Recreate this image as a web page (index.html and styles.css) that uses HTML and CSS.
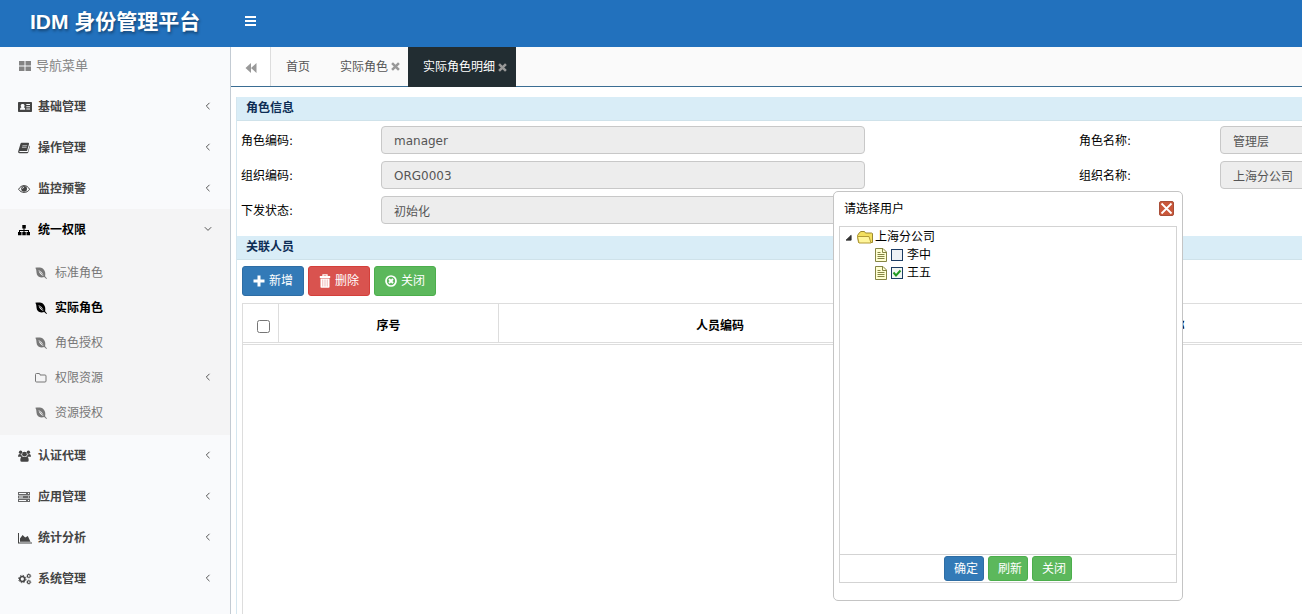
FILE: index.html
```html
<!DOCTYPE html>
<html lang="zh-CN">
<head>
<meta charset="utf-8">
<title>IDM 身份管理平台</title>
<link rel="stylesheet" href="styles.css">
</head>
<body>
<svg class="defs" aria-hidden="true">
  <symbol id="leaf" viewBox="0 0 12 12"><path fill="currentColor" fill-rule="evenodd" d="M.3.8C3 .5 6.500.2 8.500 2.200C10.600 4.400 10.500 7 10.100 9.300L12 11.600L11.400 12L9.200 10.100C6 10.900 3 10.200 1.900 7.400C1.100 5 1.800 2.600.3.800ZM3.500 3C3.700 5.500 6 8.200 8.900 9.300C8 6.200 6 4 3.500 3Z"/><path fill="none" stroke="currentColor" stroke-width=".7" d="M4 3.500 9 9.300"/></symbol>
  <symbol id="left" viewBox="0 0 6 8"><path fill="none" stroke="currentColor" stroke-width="1" d="M4.500.8 1.300 4l3.200 3.200"/></symbol>
  <symbol id="cross" viewBox="0 0 10 10"><path fill="none" stroke="currentColor" stroke-width="2.800" d="M1.200 1.200l7.600 7.600M8.800 1.200 1.200 8.800"/></symbol>
  <symbol id="sheet" viewBox="0 0 12 14"><path fill="#ffffd2" stroke="#858544" d="M.5.5h7.500l3.500 3.500v9.500H.5z"/><path fill="none" stroke="#858544" d="M7.500.5V4.500h4M2.500 4.500h3M2.500 6.500h7M2.500 8.500h7M2.500 10.500h7"/></symbol>
</svg>

<header class="topbar">
  <h1 class="brand">IDM 身份管理平台</h1>
  <button class="burger" type="button" aria-label="切换菜单"><svg width="11" height="10" viewBox="0 0 11 10"><path fill="#fff" d="M0 0h11v2H0zM0 4h11v2H0zM0 8h11v2H0z"/></svg></button>
</header>

<div class="shell">
  <nav class="sidebar">
    <div class="nav-title"><svg width="12" height="10" viewBox="0 0 12 10"><path fill="currentColor" d="M0 0h5.500v4.500H0zM6.500 0H12v4.500H6.500zM0 5.500h5.500V10H0zM6.500 5.500H12V10H6.500z"/></svg>导航菜单</div>
    <a class="nav-item" href="#"><svg class="ico" viewBox="0 0 14 12"><path fill="currentColor" fill-rule="evenodd" d="M.8 1h12.400q.8 0 .8.800v8.400q0 .8-.8.800H.8Q0 11 0 10.200V1.800Q0 1 .8 1zM2 8.800h5.200c0-1.500-.5-2.500-1.400-2.500.7-.5.800-1 .8-1.500C6.600 3.500 5.800 3 4.600 3S2.700 3.500 2.700 4.800c0 .5.200 1 .8 1.500C2.500 6.300 2 7.300 2 8.800zM8.300 3v1H12V3zM8.300 5.200v1H12v-1zM8.300 7.500v1H12v-1z"/></svg><span>基础管理</span><svg class="arrow"><use href="#left"/></svg></a>
    <a class="nav-item" href="#"><svg class="ico" viewBox="0 0 14 12"><path fill="currentColor" fill-rule="evenodd" d="M3.600.8h6.800q.9.200.6 1.100L9 9H2c-1 0-1 1.100 0 1.100h7.800L11.600 3.500q.5.500.3 1.100L10.200 10.600q-.2.700-1 .7H1.800Q.1 11.300.1 9.700L2.400 1.900Q2.800.8 3.600.8zM4.500 3l-.1.600h4.700L9.300 3zM4 4.800l-.1.600h4.600l.2-.6z"/></svg><span>操作管理</span><svg class="arrow"><use href="#left"/></svg></a>
    <a class="nav-item" href="#"><svg class="ico" viewBox="0 0 14 12"><path fill="none" stroke="currentColor" d="M.6 6.300C3.300 1.300 9 1.300 11.600 6.300 9 10.500 3.300 10.500.6 6.300z"/><circle cx="6.100" cy="5.800" r="2.900" fill="currentColor"/><path fill="none" stroke="#f9fafc" stroke-width=".8" d="M4.500 5.800q.1-1.500 1.600-1.600"/></svg><span>监控预警</span><svg class="arrow"><use href="#left"/></svg></a>
    <div class="nav-group">
      <a class="nav-item open" href="#"><svg class="ico" viewBox="0 0 14 12"><path fill="currentColor" d="M4.300 1h3.500v3.500H6.500V6H11v2h1v3.300H8.500V8H10V7H6.500v1h1.300v3.300H4.300V8h1.200V7H2v1h1.500v3.300H0V8h1V6h4.500V4.500H4.300z"/></svg><span>统一权限</span><svg class="arrow down" viewBox="0 0 8 6"><path fill="none" stroke="currentColor" d="M.8 1.200 4 4.400l3.200-3.200"/></svg></a>
      <div class="subnav">
        <a class="sub-item" href="#"><svg class="ico-sub"><use href="#leaf"/></svg><span>标准角色</span></a>
        <a class="sub-item current" href="#"><svg class="ico-sub"><use href="#leaf"/></svg><span>实际角色</span></a>
        <a class="sub-item" href="#"><svg class="ico-sub"><use href="#leaf"/></svg><span>角色授权</span></a>
        <a class="sub-item" href="#"><svg class="ico-sub" viewBox="0 0 12 12"><path fill="none" stroke="currentColor" d="M.5 2.500q0-1 1-1H4q1 0 1 1v.5h5q1 0 1 1v5q0 1-1 1H1.500q-1 0-1-1z"/></svg><span>权限资源</span><svg class="arrow"><use href="#left"/></svg></a>
        <a class="sub-item" href="#"><svg class="ico-sub"><use href="#leaf"/></svg><span>资源授权</span></a>
      </div>
    </div>
    <a class="nav-item" href="#"><svg class="ico" viewBox="0 0 14 12"><g fill="currentColor"><circle cx="2.600" cy="2.200" r="1.700"/><circle cx="10.400" cy="2.200" r="1.700"/><circle cx="6.500" cy="4.200" r="2.400"/><path d="M0 6.600Q0 4 1.500 4l2 .6Q3.500 6 4.300 6.800H.8Q0 7 0 6.600zM13 6.600Q13 4 11.500 4l-2 .6q0 1.400-.8 2.200h3.500q.8.200.8-.2zM2.300 10.200Q2.300 6.600 4.500 6.400q2 1.300 4 0 2.200.2 2.200 3.800 0 1.500-1.500 1.500H3.800q-1.500 0-1.500-1.500z"/></g></svg><span>认证代理</span><svg class="arrow"><use href="#left"/></svg></a>
    <a class="nav-item" href="#"><svg class="ico" viewBox="0 0 14 12"><path fill="currentColor" fill-opacity=".8" fill-rule="evenodd" d="M0 1h12v3H0zM1 2v1h7V2zM10 2v1h1V2zM0 4.500h12v3H0zM1 5.500v1h4v-1zM10 5.500v1h1v-1zM0 8h12v3H0zM1 9v1h7V9zM10 9v1h1V9z"/></svg><span>应用管理</span><svg class="arrow"><use href="#left"/></svg></a>
    <a class="nav-item" href="#"><svg class="ico" viewBox="0 0 14 12"><path fill="currentColor" d="M0 1h1v9.500h13v1H0zM2 9.700V6.500L4.600 3l2.600 2.600L9.800 4 12.500 9.700z"/></svg><span>统计分析</span><svg class="arrow"><use href="#left"/></svg></a>
    <a class="nav-item" href="#"><svg class="ico" viewBox="0 0 14 12"><g fill="none" stroke="currentColor"><circle cx="4.300" cy="6" r="2.500" stroke-width="1.700"/><circle cx="4.300" cy="6" r="3.700" stroke-width="1" stroke-dasharray="1.450 1.450"/><circle cx="10.800" cy="2.900" r="1.400" stroke-width="1.100"/><circle cx="10.800" cy="2.900" r="2.100" stroke-width=".6" stroke-dasharray=".820 .820"/><circle cx="10.800" cy="9.100" r="1.400" stroke-width="1.100"/><circle cx="10.800" cy="9.100" r="2.100" stroke-width=".6" stroke-dasharray=".820 .820"/></g></svg><span>系统管理</span><svg class="arrow"><use href="#left"/></svg></a>
  </nav>

  <main class="main">
    <div class="tabs">
      <button class="tab-back" type="button" aria-label="向左滚动"><svg width="12" height="10" viewBox="0 0 12 10"><path fill="currentColor" d="M6 0v10L.5 5zM11.500 0v10L6 5z"/></svg></button>
      <a class="tab" href="#">首页</a>
      <a class="tab closable" href="#">实际角色<svg class="tab-x"><use href="#cross"/></svg></a>
      <a class="tab closable active" href="#">实际角色明细<svg class="tab-x"><use href="#cross"/></svg></a>
    </div>
    <div class="viewport">
      <div class="panel">
        <h2 class="section-title">角色信息</h2>
        <form class="form">
          <label for="code">角色编码:</label><input id="code" value="manager" readonly>
          <label for="name">角色名称:</label><input id="name" value="管理层" readonly>
          <label for="org">组织编码:</label><input id="org" value="ORG0003" readonly>
          <label for="orgname">组织名称:</label><input id="orgname" value="上海分公司" readonly>
          <label for="state">下发状态:</label><input id="state" value="初始化" readonly>
        </form>
        <h2 class="section-title">关联人员</h2>
        <div class="toolbar">
          <button class="btn blue" type="button"><svg width="12" height="12" viewBox="0 0 12 12"><path fill="#fff" d="M4.500.5h3v4h4v3h-4v4h-3v-4h-4v-3h4z"/></svg>新增</button>
          <button class="btn red" type="button"><svg width="12" height="14" viewBox="0 0 12 14"><path fill="none" stroke="#fff" stroke-width="1.300" d="M4 2.500V.8h4v1.700"/><path fill="#fff" fill-rule="evenodd" d="M.8 2h10.400v2H.8zM1.500 4.600h9V13q0 .8-.8.800H2.300q-.8 0-.8-.8zM3.700 5.500v7h.4v-7zM5.800 5.500v7h.4v-7zM7.900 5.500v7h.4v-7z"/></svg>删除</button>
          <button class="btn green" type="button"><svg width="12" height="12" viewBox="0 0 12 12"><circle cx="6" cy="6" r="5" fill="none" stroke="#fff" stroke-width="1.700"/><path fill="none" stroke="#fff" stroke-width="1.900" d="M4 4l4 4M8 4 4 8"/></svg>关闭</button>
        </div>
        <div class="grid">
          <table class="grid-head">
            <colgroup><col class="c-check"><col class="c-no"><col class="c-code"><col class="c-name"><col></colgroup>
            <thead><tr><th><input type="checkbox" aria-label="全选"></th><th>序号</th><th>人员编码</th><th>人员名称</th><th></th></tr></thead>
          </table>
          <div class="grid-body"></div>
        </div>
      </div>
    </div>
  </main>
</div>

<section class="dialog" role="dialog" aria-labelledby="dlg-title">
  <div class="dialog-head">
    <h2 id="dlg-title">请选择用户</h2>
    <button class="dialog-x" type="button" aria-label="关闭窗口"><svg width="15" height="15" viewBox="0 0 15 15"><rect x=".5" y=".5" width="14" height="14" rx="1.500" fill="#c9573a" stroke="#a94e38"/><path fill="none" stroke="#fff" stroke-width="1.800" d="M2.500 2.500l10 10M12.500 2.500l-10 10"/></svg></button>
  </div>
  <div class="dialog-body">
    <div class="tree">
      <div class="node"><svg class="fold" viewBox="0 0 8 8"><path fill="#333" stroke="#333" stroke-linejoin="round" d="M7 1.500V7H1.200z"/></svg><svg class="folder" viewBox="0 0 16 13"><path fill="#f3df5e" stroke="#9c8830" d="M1.500 11.500.5 4.500l2-3L4 .5h3.500l1 1.500h6l1 .5v9z"/><path fill="#fff59a" stroke="#b29b35" d="M.5 5.500h11.500l2 6.500H2z"/></svg><span>上海分公司</span></div>
      <label class="node leaf"><svg class="sheet"><use href="#sheet"/></svg><input type="checkbox"><span>李中</span></label>
      <label class="node leaf"><svg class="sheet"><use href="#sheet"/></svg><input type="checkbox" checked><span>王五</span></label>
    </div>
    <div class="dialog-foot">
      <button class="btn small blue" type="button">确定</button>
      <button class="btn small green" type="button">刷新</button>
      <button class="btn small green" type="button">关闭</button>
    </div>
  </div>
</section>
</body>
</html>
```
FILE: styles.css
```css
* { box-sizing: border-box; }
html, body { height: 100%; }
body {
  margin: 0;
  display: flex;
  flex-direction: column;
  overflow: hidden;
  background: #fff;
  color: #000;
  font: 12px/18px "DejaVu Sans", "Noto Sans CJK SC", sans-serif;
}
a { color: inherit; text-decoration: none; }
h1, h2 { margin: 0; }
button, input { font: inherit; }
button { cursor: pointer; }
svg { flex: none; }
.defs { position: absolute; width: 0; height: 0; }

.topbar {
  flex: none;
  display: flex;
  align-items: center;
  height: 47px;
  padding-left: 30px;
  background: #2271bd;
}
.brand {
  width: 215px;
  padding-bottom: 4px;
  color: #fff;
  font: bold 21px/30px "Liberation Sans", "Noto Sans CJK SC", sans-serif;
  text-shadow: 1px 2px 3px rgba(0, 0, 0, .4);
}
.burger { display: flex; padding: 0 0 6px; border: 0; background: none; }

.shell { flex: 1; display: flex; min-height: 0; }
.sidebar {
  flex: none;
  width: 231px;
  border-right: 1px solid #c3cbd3;
  background: #f9fafc;
  color: #444;
}
.nav-title {
  display: flex;
  align-items: center;
  gap: 5px;
  height: 39px;
  padding: 0 0 2px 19px;
  color: #848484;
  font-size: 13px;
}
.nav-item, .sub-item { display: flex; align-items: center; }
.nav-item { gap: 6px; height: 41px; padding: 0 18px; font-weight: bold; }
.nav-item span, .sub-item span { flex: 1; }
.nav-item.open { color: #000; }
.ico { width: 14px; height: 12px; }
.arrow { width: 6px; height: 8px; margin: 0 1px 2px 0; color: #555; }
.arrow.down { width: 8px; height: 6px; margin-right: 0; }
.nav-group { background: #f4f4f5; }
.subnav { padding: 5px 0; }
.sub-item { gap: 8px; height: 35px; padding: 0 18px 0 35px; color: #777; }
.sub-item.current { color: #000; font-weight: bold; }
.ico-sub { width: 12px; height: 12px; }

.main { flex: 1; display: flex; flex-direction: column; min-width: 0; }
.tabs {
  flex: none;
  display: flex;
  height: 40px;
  border-bottom: 1px solid #3a6d93;
  background: #fafafa;
}
.tab-back {
  display: flex;
  align-items: center;
  justify-content: center;
  width: 40px;
  padding: 2px 0 0;
  border: 0;
  border-right: 1px solid #ddd;
  background: #fff;
  color: #999;
}
.tab { display: flex; align-items: center; padding: 0 15px; color: #555; }
.tab.closable { gap: 3px; padding-right: 8px; }
.tab.active { height: 40px; padding-right: 9px; background: #222d32; color: #fff; }
.tab-x { width: 9px; height: 9px; color: #999; }

.viewport { flex: 1; display: flex; overflow: hidden; padding: 10px 0 0 5px; }
.panel {
  flex: none;
  display: flex;
  flex-direction: column;
  width: 1684px;
  border-left: 1px solid #d5e6ef;
}
.section-title {
  padding: 2px 9px 3px;
  border-bottom: 1px solid #cfe2ea;
  background: #d9edf7;
  color: #0d2d55;
  font-size: 12px;
  line-height: 18px;
}
.form {
  display: grid;
  grid-template-columns: 140px 698px 141px 698px;
  row-gap: 7px;
  align-items: center;
  padding: 5px 0 12px 4px;
}
.form label { padding-top: 2px; }
.form input {
  width: 484px;
  height: 28px;
  padding: 1px 12px 0;
  border: 1px solid #c8c8c8;
  border-radius: 4px;
  background: #ededed;
  color: #555;
  outline: 0;
}

.toolbar { display: flex; gap: 4px; padding: 6px 0 7px 5px; }
.btn {
  display: flex;
  align-items: center;
  justify-content: center;
  gap: 4px;
  height: 30px;
  padding: 0 10px;
  border: 1px solid;
  border-radius: 3px;
  color: #fff;
}
.btn.blue { border-color: #2e6da4; background: #337ab7; }
.btn.red { border-color: #d43f3a; background: #d9534f; }
.btn.green { border-color: #4cae4c; background: #5cb85c; }
.btn.small { height: 25px; padding: 0 5px 0 9px; }

.grid {
  flex: 1;
  display: flex;
  flex-direction: column;
  gap: 1px;
  margin-left: 5px;
  border: 1px solid #ddd;
  border-bottom: 0;
}
.grid-head {
  width: 100%;
  border-collapse: separate;
  border-spacing: 0;
  table-layout: fixed;
}
.grid-head th {
  height: 39px;
  padding: 5px 0 0;
  border-right: 1px solid #ddd;
  border-bottom: 1px solid #ddd;
  vertical-align: middle;
}
.grid-head input { display: block; width: 13px; height: 13px; margin: 2px auto 0 14px; }
.grid-body { flex: 1; border-top: 1px solid #ddd; }
.c-check { width: 36px; }
.c-no { width: 220px; }
.c-code { width: 443px; }
.c-name { width: 438px; }

.dialog {
  position: absolute;
  top: 191px;
  left: 833px;
  display: flex;
  flex-direction: column;
  width: 350px;
  height: 410px;
  padding: 0 5px 17px;
  border: 1px solid #c4c4c4;
  border-radius: 5px;
  background: #fff;
}
.dialog-head {
  display: flex;
  align-items: center;
  justify-content: space-between;
  height: 34px;
  padding: 0 3px 2px 5px;
}
.dialog-head h2 { padding-top: 2px; font-size: 12px; font-weight: normal; }
.dialog-x { display: flex; padding: 0; border: 0; background: none; }
.dialog-body { flex: 1; display: flex; flex-direction: column; border: 1px solid #d3d3d3; }
.tree { flex: 1; padding: 1px 5px; }
.node { display: flex; align-items: center; height: 18px; }
.node.leaf { padding-left: 30px; }
.fold { width: 7px; height: 7px; margin-right: 5px; }
.folder { width: 16px; height: 13px; margin-right: 2px; }
.sheet { width: 12px; height: 14px; margin-right: 4px; }
.node input {
  appearance: none;
  width: 12px;
  height: 12px;
  margin: 0 4px 0 0;
  border: 1px solid #1c3c63;
  background: #eef1f5;
}
.node input:checked {
  background: #f2f7f2 url("data:image/svg+xml,%3Csvg xmlns='http://www.w3.org/2000/svg' viewBox='0 0 10 10'%3E%3Cpath d='M1.500 4.500 4 7.500l4.500-5' fill='none' stroke='%23219a21' stroke-width='2'/%3E%3C/svg%3E");
}
.dialog-foot {
  display: flex;
  justify-content: center;
  gap: 4px;
  padding: 1px 0;
  border-top: 1px solid #d3d3d3;
}
```
